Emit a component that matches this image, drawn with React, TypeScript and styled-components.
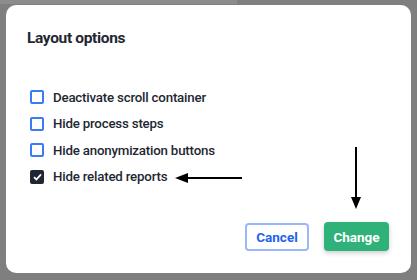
import styled, { createGlobalStyle } from "styled-components";

const options = [
  { label: "Deactivate scroll container", checked: false },
  { label: "Hide process steps", checked: false },
  { label: "Hide anonymization buttons", checked: false },
  { label: "Hide related reports", checked: true },
];

function App() {
  return (
    <>
      <GlobalStyle />
      <TopStrip />
      <Dialog>
        <Title>Layout options</Title>
        <List>
          {options.map((o) => (
            <Row key={o.label}>
              <Box $checked={o.checked}>
                {o.checked && (
                  <svg width="9" height="8" viewBox="0 0 9 8">
                    <path
                      d="M1 4.2 L3.4 6.5 L8 1.3"
                      fill="none"
                      stroke="#fff"
                      strokeWidth="1.8"
                    />
                  </svg>
                )}
              </Box>
              <Label>{o.label}</Label>
            </Row>
          ))}
        </List>
        <Footer>
          <CancelButton>Cancel</CancelButton>
          <ChangeButton>Change</ChangeButton>
        </Footer>
        <LeftArrow width="68" height="12" viewBox="0 0 68 12">
          <path d="M12 6 H67" stroke="#000" strokeWidth="2" />
          <path d="M0 6 L13 1 L13 11 Z" fill="#000" />
        </LeftArrow>
        <DownArrow width="12" height="62" viewBox="0 0 12 62">
          <path d="M6 0 V52" stroke="#000" strokeWidth="2" />
          <path d="M1 50 L11 50 L6 62 Z" fill="#000" />
        </DownArrow>
      </Dialog>
    </>
  );
}

const GlobalStyle = createGlobalStyle`
  body {
    margin: 0;
    background: #7f7f7f;
    font-family: Roboto, "Liberation Sans", sans-serif;
    width: 417px;
    height: 280px;
    overflow: hidden;
  }
`;

const TopStrip = styled.div`
  width: 237px;
  height: 4px;
  background: #8c8c8c;
`;

const Dialog = styled.div`
  position: relative;
  box-sizing: border-box;
  margin: 1px 0 0 6px;
  width: 405px;
  height: 268px;
  background: #fff;
  border-radius: 10px;
  padding: 23px 22px 22px 21px;
  display: flex;
  flex-direction: column;
`;

const Title = styled.h2`
  margin: 0;
  font-size: 15.5px;
  line-height: 20px;
  font-weight: 700;
  color: #1f2733;
  letter-spacing: -0.35px;
`;

const List = styled.div`
  margin-top: 39px;
  display: flex;
  flex-direction: column;
  gap: 6.5px;
`;

const Row = styled.div`
  display: flex;
  align-items: center;
  height: 20px;
  padding-left: 3px;
`;

const Box = styled.span<{ $checked: boolean }>`
  box-sizing: border-box;
  width: 14px;
  height: 14px;
  border-radius: 2px;
  border: 2px solid ${(p) => (p.$checked ? "#1f2733" : "#3b7cf5")};
  background: ${(p) => (p.$checked ? "#1f2733" : "#fff")};
  display: flex;
  align-items: center;
  justify-content: center;
  margin-right: 9px;
`;

const Label = styled.span`
  font-size: 13.3px;
  font-weight: 500;
  color: #1f2733;
  letter-spacing: -0.2px;
`;

const Footer = styled.div`
  margin-top: auto;
  display: flex;
  justify-content: flex-end;
  align-items: flex-end;
  gap: 15px;
`;

const CancelButton = styled.button`
  box-sizing: border-box;
  width: 64px;
  height: 28px;
  border: 2px solid #9ab8f8;
  border-radius: 4px;
  background: #fff;
  color: #2463eb;
  font-family: inherit;
  font-size: 13.5px;
  font-weight: 700;
  padding: 0;
`;

const ChangeButton = styled.button`
  box-sizing: border-box;
  width: 65px;
  height: 29px;
  border: none;
  border-radius: 4px;
  background: #2fb27a;
  color: #fff;
  font-family: inherit;
  font-size: 13.5px;
  font-weight: 700;
  padding: 0;
  box-shadow: 0 2px 5px rgba(0, 0, 0, 0.2);
`;

const LeftArrow = styled.svg`
  position: absolute;
  left: 169px;
  top: 167px;
`;

const DownArrow = styled.svg`
  position: absolute;
  left: 344px;
  top: 142px;
`;

export default App;
